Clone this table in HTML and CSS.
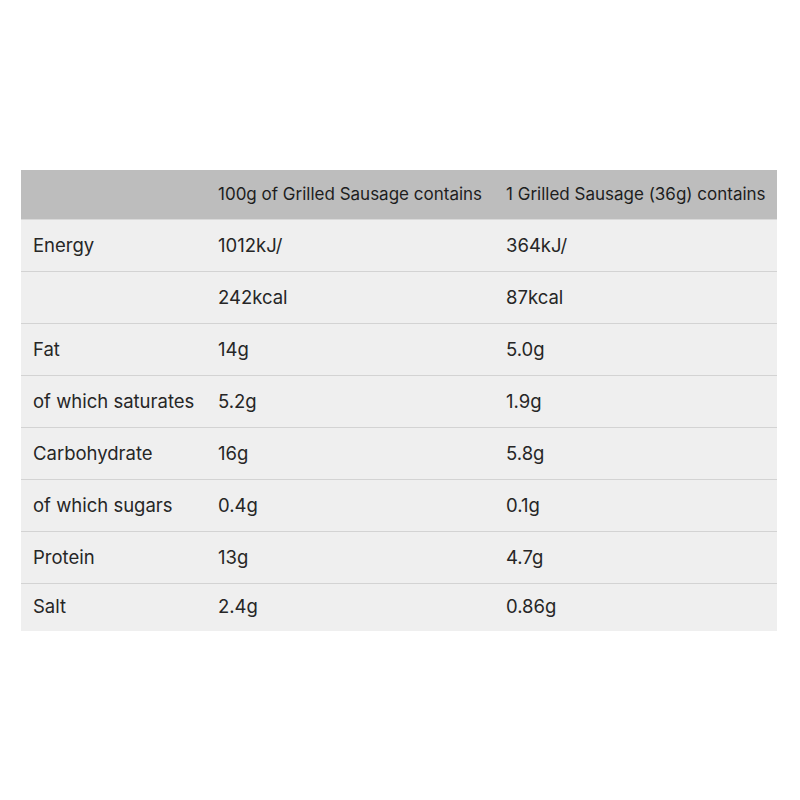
FILE: index.html
```html
<!DOCTYPE html>
<html>
<head>
<meta charset="utf-8">
<link rel="stylesheet" href="styles.css">
</head>
<body>
<div class="wrap">
<table class="nut">
<thead>
<tr><th></th><th>100g of Grilled Sausage contains</th><th>1 Grilled Sausage (36g) contains</th></tr>
</thead>
<tbody>
<tr><td>Energy</td><td>1012kJ/</td><td>364kJ/</td></tr>
<tr><td></td><td>242kcal</td><td>87kcal</td></tr>
<tr><td>Fat</td><td>14g</td><td>5.0g</td></tr>
<tr><td>of which saturates</td><td>5.2g</td><td>1.9g</td></tr>
<tr><td>Carbohydrate</td><td>16g</td><td>5.8g</td></tr>
<tr><td>of which sugars</td><td>0.4g</td><td>0.1g</td></tr>
<tr><td>Protein</td><td>13g</td><td>4.7g</td></tr>
<tr class="last"><td>Salt</td><td>2.4g</td><td>0.86g</td></tr>
</tbody>
</table>
</div>
</body>
</html>
```
FILE: styles.css
```css
html, body { margin: 0; padding: 0; background: #fff; }
body { font-family: Inter, "Liberation Sans", Arial, sans-serif; color: #262626; }
.wrap { padding-top: 170px; padding-left: 21px; width: 756px; }
.nut { width: 756px; border-collapse: collapse; table-layout: fixed; }
.nut th:nth-child(1), .nut td:nth-child(1) { width: 185px; }
.nut th:nth-child(2), .nut td:nth-child(2) { width: 288px; }
.nut th { background: #bdbdbd; height: 49px; padding: 0 0 0 12px; text-align: left; font-weight: 400; font-size: 17px; color: #1e1e1e; box-sizing: border-box; }
.nut td { background: #efefef; height: 52px; padding: 0 0 0 12px; border-top: 1px solid #d3d3d3; box-sizing: border-box; vertical-align: middle; font-size: 18.5px; }
.nut thead th { border-bottom: 1px solid #d9d9d9; }
.nut tr.last td { height: 48px; padding-bottom: 2px; }
```
